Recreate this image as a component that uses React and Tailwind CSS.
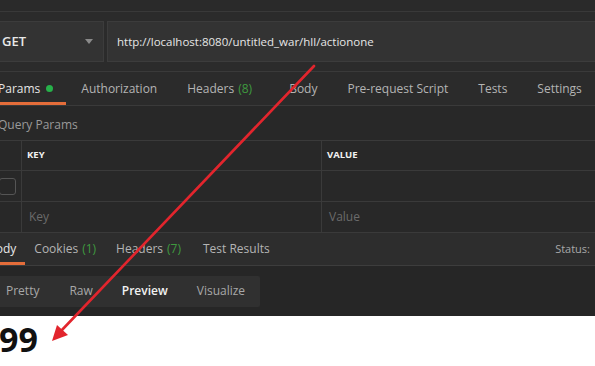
import React from 'react';

const topTabs = [
  { label: 'Authorization' },
  { label: 'Headers', count: '(8)' },
  { label: 'Body', extra: 'ml-[7px]' },
  { label: 'Pre-request Script' },
  { label: 'Tests' },
  { label: 'Settings' },
];

const viewModes = ['Pretty', 'Raw', 'Preview', 'Visualize'];

const Arrow = () => (
  <svg className="absolute inset-0 pointer-events-none" width="595" height="366" viewBox="0 0 595 366">
    <line x1="314" y1="66" x2="61" y2="331" stroke="#e2252d" strokeWidth="2.6" strokeLinecap="round" />
    <polygon points="52,341 57,325 68,335" fill="#e2252d" />
  </svg>
);

const App = () => {
  return (
    <div className="relative w-[595px] h-[366px] overflow-hidden bg-white font-['Open_Sans',sans-serif] text-[12px] whitespace-nowrap">
      {/* Top strip */}
      <div className="h-[12px] bg-[#2a2a2a] border-b border-[#393939]"></div>

      {/* Request bar */}
      <div className="bg-[#2b2b2b] pt-[9px] pb-[9px] border-b border-[#3a3a3a]">
        <div className="flex h-[41px] gap-[3px]">
          <div className="w-[104px] bg-[#333333] border border-[#3c3c3c] border-l-0 flex items-center justify-between pl-[2px] pr-[10px]">
            <span className="text-[#e8e8e8] font-semibold text-[13px]">GET</span>
            <span className="w-0 h-0 border-l-[4px] border-r-[4px] border-t-[5px] border-l-transparent border-r-transparent border-t-[#8a8a8a]"></span>
          </div>
          <div className="flex-1 bg-[#333333] border border-[#3c3c3c] border-r-0 flex items-center pl-[9px]">
            <span className="text-[#e6e6e6] text-[11.5px]">http://localhost:8080/untitled_war/hll/actionone</span>
          </div>
        </div>
      </div>

      {/* Request tabs */}
      <div className="bg-[#2b2b2b] h-[34px] flex items-stretch border-b border-[#3a3a3a] -ml-[17px]">
        <div className="relative flex items-center gap-[6px] pl-[15px] pr-[13px] text-[#e6e6e6]">
          <span>Params</span>
          <span className="w-[7px] h-[7px] rounded-full bg-[#27b14a]"></span>
          <span className="absolute left-0 right-0 bottom-0 h-[3px] bg-[#e46d3a]"></span>
        </div>
        {topTabs.map((t) => (
          <div key={t.label} className={`flex items-center px-[15px] text-[#b4b4b4] ${t.extra || ''}`}>
            <span>{t.label}</span>
            {t.count && <span className="ml-[4px] text-[#3f9a3f]">{t.count}</span>}
          </div>
        ))}
      </div>

      {/* Query params */}
      <div className="bg-[#282828] h-[34px] flex items-center pt-[3px] text-[#9a9a9a] -ml-[2px]">Query Params</div>

      {/* Params table */}
      <div className="bg-[#282828] border-t border-[#3a3a3a]">
        <div className="flex h-[30px] border-b border-[#3a3a3a]">
          <div className="w-[22px] border-r border-[#3a3a3a]"></div>
          <div className="w-[300px] border-r border-[#3a3a3a] flex items-center pl-[5px] text-[9.5px] font-bold text-[#f2f2f2]">KEY</div>
          <div className="flex-1 flex items-center pl-[5px] text-[9.5px] font-bold text-[#f2f2f2]">VALUE</div>
        </div>
        <div className="flex h-[31px] border-b border-[#3a3a3a]">
          <div className="w-[22px] border-r border-[#3a3a3a] flex items-center">
            <span className="w-[17px] h-[17px] border border-[#555555] rounded-[3px] -ml-[1px]"></span>
          </div>
          <div className="w-[300px] border-r border-[#3a3a3a]"></div>
          <div className="flex-1"></div>
        </div>
        <div className="flex h-[31px] border-b border-[#3a3a3a]">
          <div className="w-[22px] border-r border-[#3a3a3a]"></div>
          <div className="w-[300px] border-r border-[#3a3a3a] flex items-center pl-[7px] text-[#6b6b6b]">Key</div>
          <div className="flex-1 flex items-center pl-[7px] text-[#6b6b6b]">Value</div>
        </div>
      </div>

      {/* Response tabs */}
      <div className="bg-[#2d2d2d] h-[33px] flex items-stretch border-b border-[#3d3d3d]">
        <div className="flex items-stretch -ml-[21px]">
          <div className="relative flex items-center px-[9px] text-[#e8e8e8]">
            <span>Body</span>
            <span className="absolute left-0 right-0 bottom-0 h-[3px] bg-[#e46d3a]"></span>
          </div>
          <div className="flex items-center px-[9px] text-[#b4b4b4]">
            Cookies <span className="ml-[4px] text-[#3f9a3f]">(1)</span>
          </div>
          <div className="flex items-center px-[11px] text-[#b4b4b4]">
            Headers <span className="ml-[4px] text-[#3f9a3f]">(7)</span>
          </div>
          <div className="flex items-center px-[11px] text-[#b4b4b4]">Test Results</div>
        </div>
        <div className="ml-auto flex items-center pr-[5px] text-[11px] text-[#a8a8a8]">Status:</div>
      </div>

      {/* View modes */}
      <div className="bg-[#262626] h-[50px] flex items-center">
        <div className="flex h-[31px] bg-[#303030] -ml-[9px] rounded-r-[2px]">
          {viewModes.map((m) => (
            <div
              key={m}
              className={`flex items-center ${m === 'Preview' ? 'px-[14px] text-[#f2f2f2] font-semibold' : 'px-[15px] text-[#a8a8a8]'}`}
            >
              {m}
            </div>
          ))}
        </div>
      </div>

      {/* Preview output */}
      <div className="bg-white pt-[6px] leading-none">
        <span className="text-[34px] font-bold text-[#111111] -ml-[1px]">99</span>
      </div>

      <Arrow />
    </div>
  );
};

export default App;
